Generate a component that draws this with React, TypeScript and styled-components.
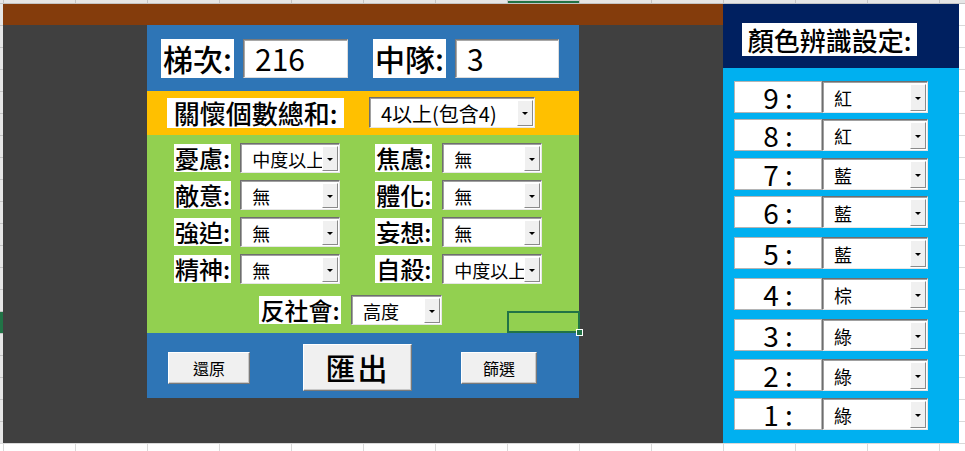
import React from "react";
import styled, { createGlobalStyle } from "styled-components";

const FONT = `"Noto Sans CJK TC", "Microsoft JhengHei", "Noto Sans", sans-serif`;

const Global = createGlobalStyle`
  html, body { margin: 0; padding: 0; }
  body {
    width: 965px;
    height: 451px;
    overflow: hidden;
    background-color: #ffffff;
    background-image:
      linear-gradient(to right, #d9d9d9 1px, transparent 1px),
      linear-gradient(to bottom, #d9d9d9 1px, transparent 1px);
    background-size: 72px 22px;
    background-position: 3px 3px;
    font-family: ${FONT};
  }
`;

const Page = styled.div`
  width: 965px;
  height: 451px;
  display: flex;
  flex-direction: column;
`;

/* ---------- sheet headers ---------- */
const ColumnHeader = styled.div`
  display: flex;
  height: 3px;
  border-bottom: 1px solid #c4c4c4;
  background: #e6e6e6;
  overflow: hidden;
`;
const HeaderCorner = styled.div`
  width: 3px;
  flex: none;
`;
const ColCell = styled.div<{ $selected?: boolean }>`
  width: 72px;
  flex: none;
  box-sizing: border-box;
  border-left: 1px solid #c4c4c4;
  background: ${(p) => (p.$selected ? "#d2d2d2" : "transparent")};
  box-shadow: ${(p) => (p.$selected ? "inset 0 -2px 0 #217346" : "none")};
`;

const SheetRow = styled.div`
  display: flex;
  height: 439px;
`;
const RowHeader = styled.div`
  width: 3px;
  flex: none;
  display: flex;
  flex-direction: column;
  background: #e6e6e6;
`;
const RowCell = styled.div<{ $first?: boolean; $selected?: boolean }>`
  height: ${(p) => (p.$first ? 21 : 22)}px;
  flex: none;
  box-sizing: border-box;
  border-top: ${(p) => (p.$first ? "none" : "1px solid #c4c4c4")};
  background: ${(p) => (p.$selected ? "#217346" : "transparent")};
`;

/* ---------- left zone ---------- */
const LeftZone = styled.div`
  width: 720px;
  flex: none;
  display: flex;
  flex-direction: column;
  position: relative;
`;
const BrownBand = styled.div`
  height: 21px;
  flex: none;
  background: #843c0c;
`;
const DarkArea = styled.div`
  flex: 1;
  background: #404040;
  padding-left: 144px;
`;
const MainPanel = styled.div`
  width: 432px;
  display: flex;
  flex-direction: column;
`;
const TopBand = styled.div`
  height: 66px;
  background: #2e75b6;
  display: flex;
  align-items: flex-start;
  box-sizing: border-box;
  padding: 14px 0 0 14px;
`;
const SumBand = styled.div`
  height: 44px;
  background: #ffc000;
  display: flex;
  align-items: flex-start;
  box-sizing: border-box;
  padding: 6px 0 0 20px;
`;
const GreenBand = styled.div`
  height: 198px;
  background: #92d050;
  display: flex;
  flex-direction: column;
  box-sizing: border-box;
  padding: 8px 0 0 27px;
  gap: 7px;
`;
const BottomBand = styled.div`
  height: 65px;
  background: #2e75b6;
  display: flex;
  align-items: center;
  box-sizing: border-box;
  padding: 4px 0 0 21px;
`;

const Tag = styled.div<{ $w: number; $h: number; $size: number; $mt?: number }>`
  min-width: ${(p) => p.$w}px;
  height: ${(p) => p.$h}px;
  margin-top: ${(p) => p.$mt ?? 0}px;
  flex: none;
  box-sizing: border-box;
  background: #ffffff;
  color: #000;
  font-size: ${(p) => p.$size}px;
  font-weight: 500;
  line-height: ${(p) => p.$h}px;
  text-align: center;
  white-space: nowrap;
  padding: 0 1px;
`;

const TextBox = styled.div<{ $w: number }>`
  width: ${(p) => p.$w}px;
  height: 39px;
  flex: none;
  box-sizing: border-box;
  background: #fff;
  border: 1px solid;
  border-color: #7a7a7a #dcdcdc #dcdcdc #7a7a7a;
  box-shadow: inset 1px 1px 0 #a8a8a8;
  font-size: 30px;
  font-weight: 400;
  line-height: 37px;
  padding-left: 11px;
  color: #000;
`;

const Combo = styled.div<{ $w: number; $h: number; $size: number; $mt?: number }>`
  width: ${(p) => p.$w}px;
  height: ${(p) => p.$h}px;
  margin-top: ${(p) => p.$mt ?? 0}px;
  flex: none;
  box-sizing: border-box;
  background: #fff;
  border: 1px solid;
  border-color: #6e6e6e #e6e6e6 #e6e6e6 #6e6e6e;
  box-shadow: inset 1px 1px 0 #a0a0a0;
  display: flex;
  align-items: stretch;
  padding: 2px 1px 1px 0;
  font-size: ${(p) => p.$size}px;
  color: #000;
`;
const ComboValue = styled.div`
  flex: 1;
  min-width: 0;
  overflow: hidden;
  white-space: nowrap;
  padding-left: 11px;
  display: flex;
  align-items: center;
`;
const ArrowButton = styled.div`
  width: 16px;
  flex: none;
  box-sizing: border-box;
  background: #f0f0f0;
  border: 1px solid;
  border-color: #ffffff #8a8a8a #8a8a8a #ffffff;
  display: flex;
  align-items: center;
  justify-content: center;
`;
const ArrowTri = styled.div`
  width: 0;
  height: 0;
  border-left: 3px solid transparent;
  border-right: 3px solid transparent;
  border-top: 3px solid #000;
  margin-top: 1px;
`;

const ItemRow = styled.div<{ $indent?: number; $mt?: number }>`
  display: flex;
  align-items: center;
  height: 30px;
  margin-left: ${(p) => p.$indent ?? 0}px;
  margin-top: ${(p) => p.$mt ?? 0}px;
`;
const Spacer = styled.div<{ $w: number }>`
  width: ${(p) => p.$w}px;
  flex: none;
`;

const PushButton = styled.div<{ $w: number; $h: number; $size: number; $strong?: boolean }>`
  width: ${(p) => p.$w}px;
  height: ${(p) => p.$h}px;
  flex: none;
  box-sizing: border-box;
  background: #f0f0f0;
  border: 1px solid;
  border-color: #ffffff #7a7a7a #7a7a7a #ffffff;
  box-shadow: inset -1px -1px 0 #c8c8c8;
  font-size: ${(p) => p.$size}px;
  font-weight: ${(p) => (p.$strong ? 500 : 400)};
  line-height: ${(p) => p.$h - 2}px;
  text-align: center;
  color: #000;
  letter-spacing: ${(p) => (p.$strong ? "2px" : "0")};
`;

const Selection = styled.div`
  position: absolute;
  left: 504px;
  top: 307px;
  width: 73px;
  height: 22px;
  box-sizing: border-box;
  border: 2px solid #217346;
`;
const FillHandle = styled.div`
  position: absolute;
  right: -5px;
  bottom: -5px;
  width: 5px;
  height: 5px;
  background: #217346;
  border: 1px solid #ffffff;
`;

/* ---------- right panel ---------- */
const RightPanel = styled.div`
  width: 236px;
  flex: none;
  display: flex;
  flex-direction: column;
`;
const NavyHead = styled.div`
  height: 64px;
  flex: none;
  display: flex;
  align-items: flex-start;
  background: #002060;
  box-sizing: border-box;
  padding: 19px 0 0 19px;
`;
const ColorBody = styled.div`
  flex: 1;
  background: #00b0f0;
  display: flex;
  flex-direction: column;
  padding-left: 11px;
`;
const ColorRow = styled.div<{ $gap: number }>`
  display: flex;
  margin-top: ${(p) => p.$gap}px;
  height: 32px;
`;
const NumBox = styled.div`
  width: 88px;
  height: 32px;
  flex: none;
  box-sizing: border-box;
  background: #fff;
  border: 1px solid #b4b4b4;
  font-size: 28px;
  font-weight: 400;
  line-height: 30px;
  text-align: center;
  color: #000;
  white-space: pre;
`;

const Dropdown: React.FC<{ w: number; h: number; size: number; value: string; mt?: number }> = ({
  w,
  h,
  size,
  value,
  mt,
}) => (
  <Combo $w={w} $h={h} $size={size} $mt={mt}>
    <ComboValue>{value}</ComboValue>
    <ArrowButton>
      <ArrowTri />
    </ArrowButton>
  </Combo>
);

const items: [string, string, string, string][] = [
  ["憂慮:", "中度以上", "焦慮:", "無"],
  ["敵意:", "無", "體化:", "無"],
  ["強迫:", "無", "妄想:", "無"],
  ["精神:", "無", "自殺:", "中度以上"],
];

const colorRows: { n: string; c: string; gap: number }[] = [
  { n: "9 :", c: "紅", gap: 13 },
  { n: "8 :", c: "紅", gap: 6 },
  { n: "7 :", c: "藍", gap: 7 },
  { n: "6 :", c: "藍", gap: 6 },
  { n: "5 :", c: "藍", gap: 9 },
  { n: "4 :", c: "棕", gap: 9 },
  { n: "3 :", c: "綠", gap: 9 },
  { n: "2 :", c: "綠", gap: 8 },
  { n: "1 :", c: "綠", gap: 7 },
];

export default function App() {
  const cols = Array.from({ length: 14 }, (_, i) => i);
  const rows = Array.from({ length: 20 }, (_, i) => i);
  return (
    <>
      <Global />
      <Page>
        <ColumnHeader>
          <HeaderCorner />
          {cols.map((i) => (
            <ColCell key={i} $selected={i === 7} />
          ))}
        </ColumnHeader>
        <SheetRow>
          <RowHeader>
            {rows.map((i) => (
              <RowCell key={i} $first={i === 0} $selected={i === 14} />
            ))}
          </RowHeader>
          <LeftZone>
            <BrownBand />
            <DarkArea>
              <MainPanel>
                <TopBand>
                  <Tag $w={73} $h={39} $size={30}>梯次:</Tag>
                  <Spacer $w={9} />
                  <TextBox $w={105}>216</TextBox>
                  <Spacer $w={25} />
                  <Tag $w={73} $h={39} $size={30}>中隊:</Tag>
                  <Spacer $w={9} />
                  <TextBox $w={104}>3</TextBox>
                </TopBand>
                <SumBand>
                  <Tag $w={177} $h={30} $size={26} $mt={1}>關懷個數總和:</Tag>
                  <Spacer $w={25} />
                  <Dropdown w={166} h={31} size={20} value="4以上(包含4)" />
                </SumBand>
                <GreenBand>
                  {items.map(([l1, v1, l2, v2]) => (
                    <ItemRow key={l1}>
                      <Tag $w={56} $h={28} $size={24}>{l1}</Tag>
                      <Spacer $w={9} />
                      <Dropdown w={100} h={30} size={18} value={v1} />
                      <Spacer $w={35} />
                      <Tag $w={55} $h={28} $size={24}>{l2}</Tag>
                      <Spacer $w={10} />
                      <Dropdown w={100} h={30} size={18} value={v2} />
                    </ItemRow>
                  ))}
                  <ItemRow $indent={85} $mt={4}>
                    <Tag $w={82} $h={28} $size={24}>反社會:</Tag>
                    <Spacer $w={10} />
                    <Dropdown w={91} h={30} size={18} value="高度" />
                  </ItemRow>
                </GreenBand>
                <BottomBand>
                  <PushButton $w={82} $h={32} $size={16}>還原</PushButton>
                  <Spacer $w={53} />
                  <PushButton $w={109} $h={47} $size={30} $strong>匯出</PushButton>
                  <Spacer $w={49} />
                  <PushButton $w={76} $h={32} $size={16}>篩選</PushButton>
                </BottomBand>
              </MainPanel>
            </DarkArea>
            <Selection>
              <FillHandle />
            </Selection>
          </LeftZone>
          <RightPanel>
            <NavyHead>
              <Tag $w={175} $h={33} $size={26}>顏色辨識設定:</Tag>
            </NavyHead>
            <ColorBody>
              {colorRows.map((r) => (
                <ColorRow key={r.n} $gap={r.gap}>
                  <NumBox>{r.n}</NumBox>
                  <Dropdown w={106} h={32} size={18} value={r.c} />
                </ColorRow>
              ))}
            </ColorBody>
          </RightPanel>
        </SheetRow>
      </Page>
    </>
  );
}
